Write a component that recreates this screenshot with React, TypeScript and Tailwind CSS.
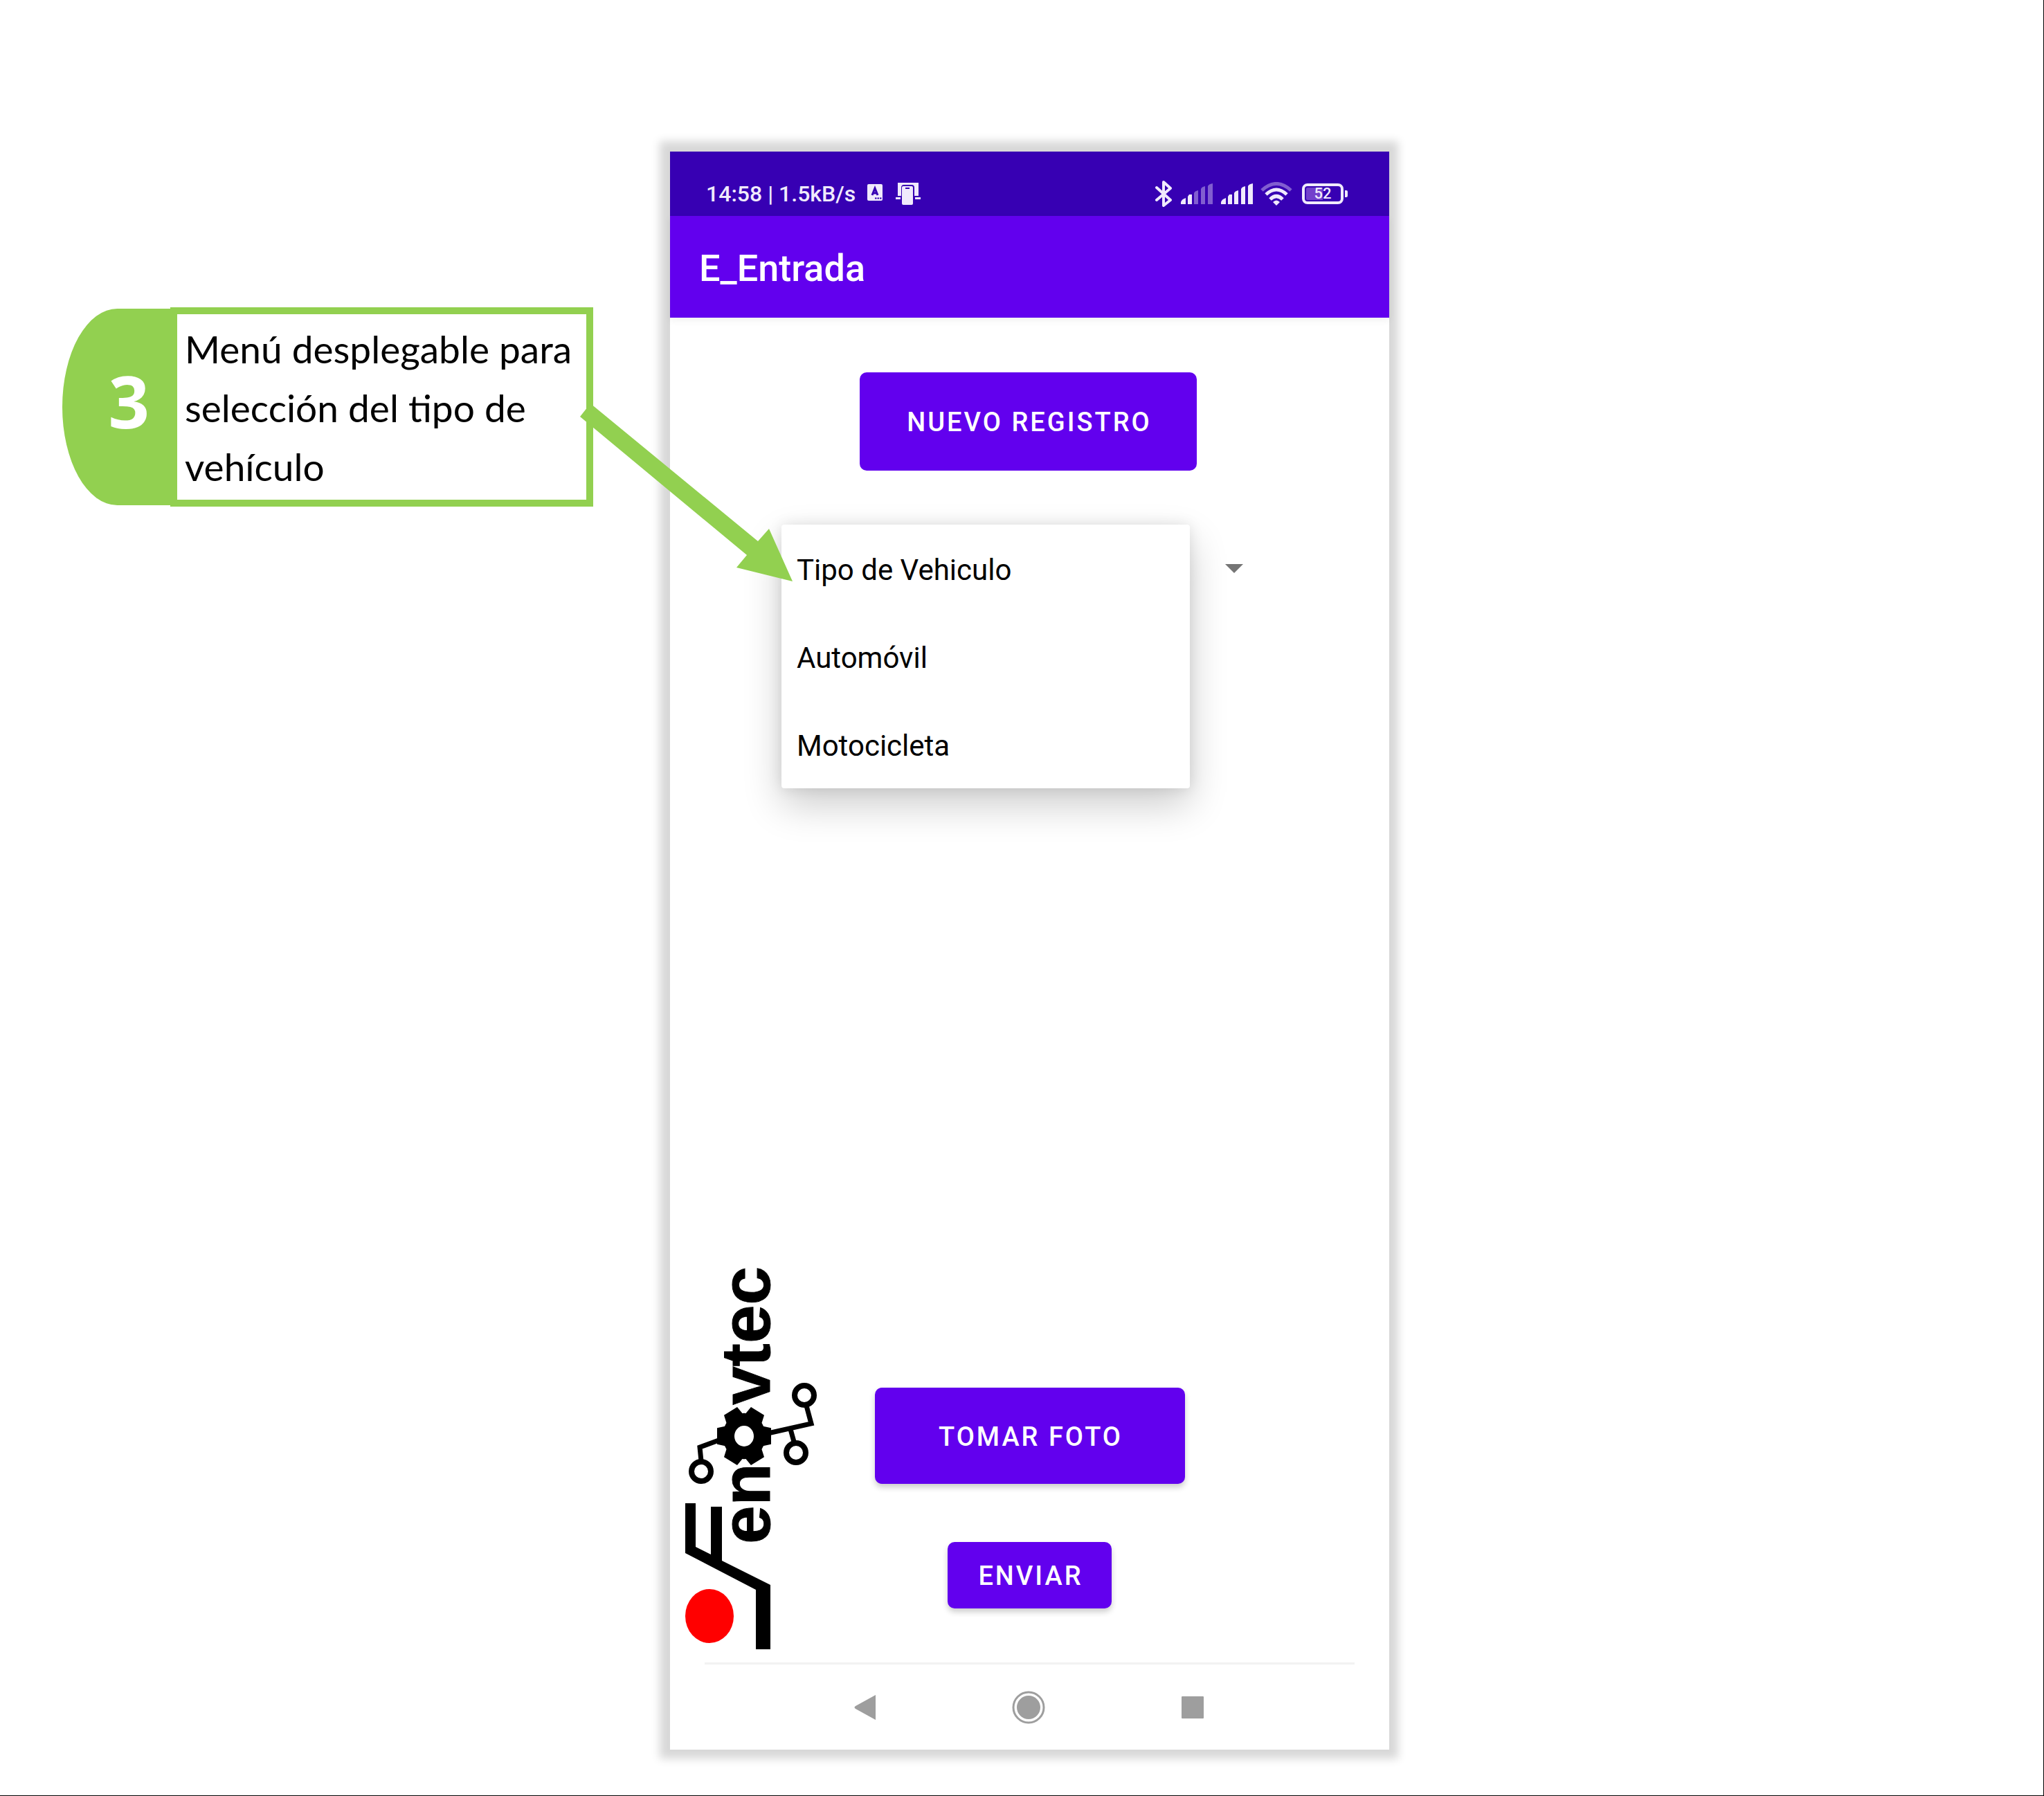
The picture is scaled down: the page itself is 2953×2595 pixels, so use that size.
import React, { useState } from "react";

const VEHICLE_OPTIONS = ["Tipo de Vehiculo", "Automóvil", "Motocicleta"];

function Callout() {
  return (
    <aside className="relative flex items-stretch">
      <div className="my-[2px] flex w-[156px] shrink-0 items-center justify-end rounded-l-[80px_143px] bg-[#92d050] pr-[30px] pb-[18px]">
        <span className="font-['Open_Sans'] text-[104px] leading-none font-bold text-white">3</span>
      </div>
      <div className="flex-1 border-[10px] border-[#92d050] bg-white pt-[8px] pb-[5px] pl-[11px]">
        <p className="font-[Lato,sans-serif] text-[55px] leading-[85px] text-black">
          Menú desplegable para selección del tipo de vehículo
        </p>
      </div>
      <svg
        className="pointer-events-none absolute top-[126px] left-full z-20 -ml-[27px] h-[275px] w-[320px]"
        viewBox="0 0 320 275"
        aria-hidden="true"
      >
        <polygon points="8,32 23,13 265,212 281,194 315,270 234,250 249,232" fill="#92d050" />
      </svg>
    </aside>
  );
}

function SignalIcon({ level }: { level: number }) {
  const bars = [
    "M0 30V27Q1 23 7 21V30Z",
    "M10 30V19L12 16H16V30Z",
    "M19 30V14Q20 11 25 10V30Z",
    "M29 30V8Q30 5 35 4V30Z",
    "M39 30V4Q40 1 46 0V30Z",
  ];
  return (
    <svg className="h-[30px] w-[46px]" viewBox="0 0 46 30" aria-hidden="true">
      {bars.map((d, i) => (
        <path key={d} d={d} fill="#f0eafc" opacity={i < level ? 1 : 0.4} />
      ))}
    </svg>
  );
}

function StatusBar() {
  return (
    <div className="flex h-[93px] items-center justify-between bg-[#3700b3] pt-[28px] pr-[60px] pl-[52px] text-[#f0eafc]">
      <div className="flex items-center">
        <span className="text-[32px] leading-[32px] font-medium">14:58 | 1.5kB/s</span>
        <svg className="ml-[16px] h-[34px] w-[78px]" viewBox="0 0 78 34" aria-hidden="true">
          <rect x="1" y="3" width="22" height="24" rx="2" fill="#f0eafc" />
          <path d="M8 19L12 9L16 19M9 16H15" fill="none" stroke="#3700b3" strokeWidth="3" />
          <path d="M12 23.5H22" stroke="#3700b3" strokeWidth="2" strokeDasharray="2.5 1" />
          <path d="M45 1H75V20H69V8Q69 4 65 4H54Q50 4 50 8V20H45Z" fill="#f0eafc" />
          <path d="M42 22H49V25H42ZM70 22H78V25H70Z" fill="#f0eafc" />
          <rect x="51" y="6" width="16" height="27" rx="2" fill="#f0eafc" />
          <path d="M56 9H62" stroke="#3700b3" strokeWidth="2" />
        </svg>
      </div>
      <div className="flex items-center">
        <svg className="mr-[13px] h-[40px] w-[24px]" viewBox="0 0 24 40" aria-hidden="true">
          <path
            d="M2 11L22 29L12 37V3L22 12L2 29"
            fill="none"
            stroke="#f0eafc"
            strokeWidth="4"
            strokeLinecap="round"
            strokeLinejoin="round"
          />
        </svg>
        <SignalIcon level={2} />
        <span className="w-[12px]" />
        <SignalIcon level={5} />
        <svg className="ml-[11px] h-[34px] w-[46px]" viewBox="0 0 46 34" fill="none" aria-hidden="true">
          <path d="M2 12Q23 -7 44 12" stroke="#f0eafc" strokeOpacity="0.4" strokeWidth="5" />
          <path d="M8 18Q23 4 38 18" stroke="#f0eafc" strokeWidth="5" />
          <path d="M14 25Q23 16 32 25" stroke="#f0eafc" strokeWidth="5" />
          <path d="M18 29Q23 24 28 29L23 34Z" fill="#f0eafc" />
        </svg>
        <div className="ml-[14px] flex items-center gap-[2px]">
          <div className="flex h-[30px] w-[60px] items-center justify-center rounded-[8px] border-4 border-[#f0eafc] bg-linear-to-r from-[#7340cc] from-50% to-transparent to-50% bg-clip-content p-[2px]">
            <span className="text-[22px] leading-[22px] font-medium">52</span>
          </div>
          <div className="h-[10px] w-[4px] rounded-r-[2px] bg-[#f0eafc]" />
        </div>
      </div>
    </div>
  );
}

function EnovtecLogo() {
  return (
    <svg className="h-[560px] w-[200px]" viewBox="0 0 200 560" role="img" aria-label="enovtec">
      <g
        fontFamily="'Liberation Sans', Arial, sans-serif"
        fontWeight="700"
        fontSize="100"
        fill="#000"
        stroke="#000"
        strokeWidth="1"
      >
        <text transform="translate(127 205) rotate(-90)">vtec</text>
        <text transform="translate(127 406) rotate(-90)">en</text>
      </g>
      <g fill="none" stroke="#000" strokeWidth="7">
        <path d="M120 247L187 232L180 206" />
        <path d="M157 240L162 258" />
        <path d="M56 255L26 266L28 286" />
        <g strokeWidth="8">
          <circle cx="177" cy="191" r="14" />
          <circle cx="165" cy="274" r="14" />
          <circle cx="28" cy="301" r="14" />
        </g>
      </g>
      <g transform="translate(90 250) scale(1 1.07)">
        <circle r="31" />
        {[0, 60, 120].map((angle) => (
          <path
            key={angle}
            transform={`rotate(${angle})`}
            d="M-39 -11L-24 -14H24L39 -11V11L24 14H-24L-39 11Z"
          />
        ))}
        <circle r="14" fill="#fff" />
      </g>
      <path d="M5 347H20V410L42 421V352H58V430L128 465V558H107V472L5 419Z" />
      <ellipse cx="40" cy="510" rx="35" ry="39" fill="#f00" />
    </svg>
  );
}

function ActionButton({ className, children }: { className: string; children: React.ReactNode }) {
  return (
    <button
      type="button"
      className={`rounded-[10px] bg-[#6200ee] pt-[3px] pl-[3px] text-[38px] font-medium tracking-[3px] text-white uppercase ${className}`}
    >
      {children}
    </button>
  );
}

function VehicleSpinner() {
  const [selected, setSelected] = useState(VEHICLE_OPTIONS[0]);
  return (
    <div className="relative h-[127px] w-[717px] text-[42px] text-black">
      <button
        type="button"
        aria-haspopup="listbox"
        aria-expanded="true"
        aria-label="Tipo de vehículo"
        className="flex h-full w-full items-center justify-end pr-[50px]"
      >
        <svg className="h-[13px] w-[26px]" viewBox="0 0 26 13" aria-hidden="true">
          <path d="M0 0H26L13 13Z" fill="#757575" />
        </svg>
      </button>
      <div
        role="listbox"
        aria-label="Tipo de vehículo"
        className="absolute top-0 left-0 z-10 flex w-[590px] flex-col rounded-[4px] bg-white shadow-[0_24px_56px_rgba(0,0,0,0.2),0_0_20px_rgba(0,0,0,0.1)]"
      >
        {VEHICLE_OPTIONS.map((option) => (
          <button
            key={option}
            type="button"
            role="option"
            aria-selected={option === selected}
            onClick={() => setSelected(option)}
            className="h-[127px] pt-[3px] pl-[22px] text-left"
          >
            {option}
          </button>
        ))}
      </div>
    </div>
  );
}

function NavigationBar() {
  return (
    <nav className="mx-[50px] flex h-[126px] items-center border-t-3 border-[#f2f2f2] pr-[218px] pl-[216px]">
      <div className="flex w-full items-center justify-between">
        <button type="button" aria-label="Atrás">
          <svg className="h-[36px] w-[31px]" viewBox="0 0 31 36" aria-hidden="true">
            <path d="M31 0V36L2 20Q-1 18 2 16Z" fill="#9e9e9e" />
          </svg>
        </button>
        <button type="button" aria-label="Inicio">
          <svg className="h-[48px] w-[48px]" viewBox="0 0 48 48" aria-hidden="true">
            <circle cx="24" cy="24" r="22" fill="none" stroke="#9e9e9e" strokeWidth="3" />
            <circle cx="24" cy="24" r="17" fill="#9e9e9e" />
          </svg>
        </button>
        <button type="button" aria-label="Recientes">
          <svg className="h-[32px] w-[32px]" viewBox="0 0 32 32" aria-hidden="true">
            <rect width="32" height="32" rx="1" fill="#9e9e9e" />
          </svg>
        </button>
      </div>
    </nav>
  );
}

export default function App() {
  return (
    <div className="grid min-h-screen grid-cols-[968fr_1039fr_945fr] items-start border-r border-b border-black bg-white pt-[219px] pb-[60px]">
      <div className="relative z-20 pt-[225px] pr-[111px] pl-[90px]">
        <Callout />
      </div>
      <main className="flex flex-col bg-white font-[Roboto,sans-serif] shadow-[-1px_-1px_12px_14px_#d8d8d8]">
        <StatusBar />
        <header className="flex h-[147px] items-center bg-[#6200ee] pt-[4px] pl-[42px] text-white shadow-[0_4px_10px_rgba(0,0,0,0.06)]">
          <h1 className="text-[54px] leading-[60px] font-medium">E_Entrada</h1>
        </header>
        <section className="flex flex-col items-center pt-[79px]">
          <ActionButton className="mr-[4px] h-[142px] w-[487px]">Nuevo registro</ActionButton>
          <div className="pt-[78px]">
            <VehicleSpinner />
          </div>
        </section>
        <section className="grid grid-cols-[1fr_auto_1fr] pt-[940px] pb-[17px] pl-[17px]">
          <EnovtecLogo />
          <div className="-ml-[17px] flex flex-col items-center gap-[84px] pt-[180px]">
            <ActionButton className="h-[139px] w-[448px] shadow-[0_5px_8px_rgba(0,0,0,0.2)]">Tomar foto</ActionButton>
            <ActionButton className="h-[96px] w-[237px] shadow-[0_5px_8px_rgba(0,0,0,0.2)]">Enviar</ActionButton>
          </div>
        </section>
        <NavigationBar />
      </main>
    </div>
  );
}
